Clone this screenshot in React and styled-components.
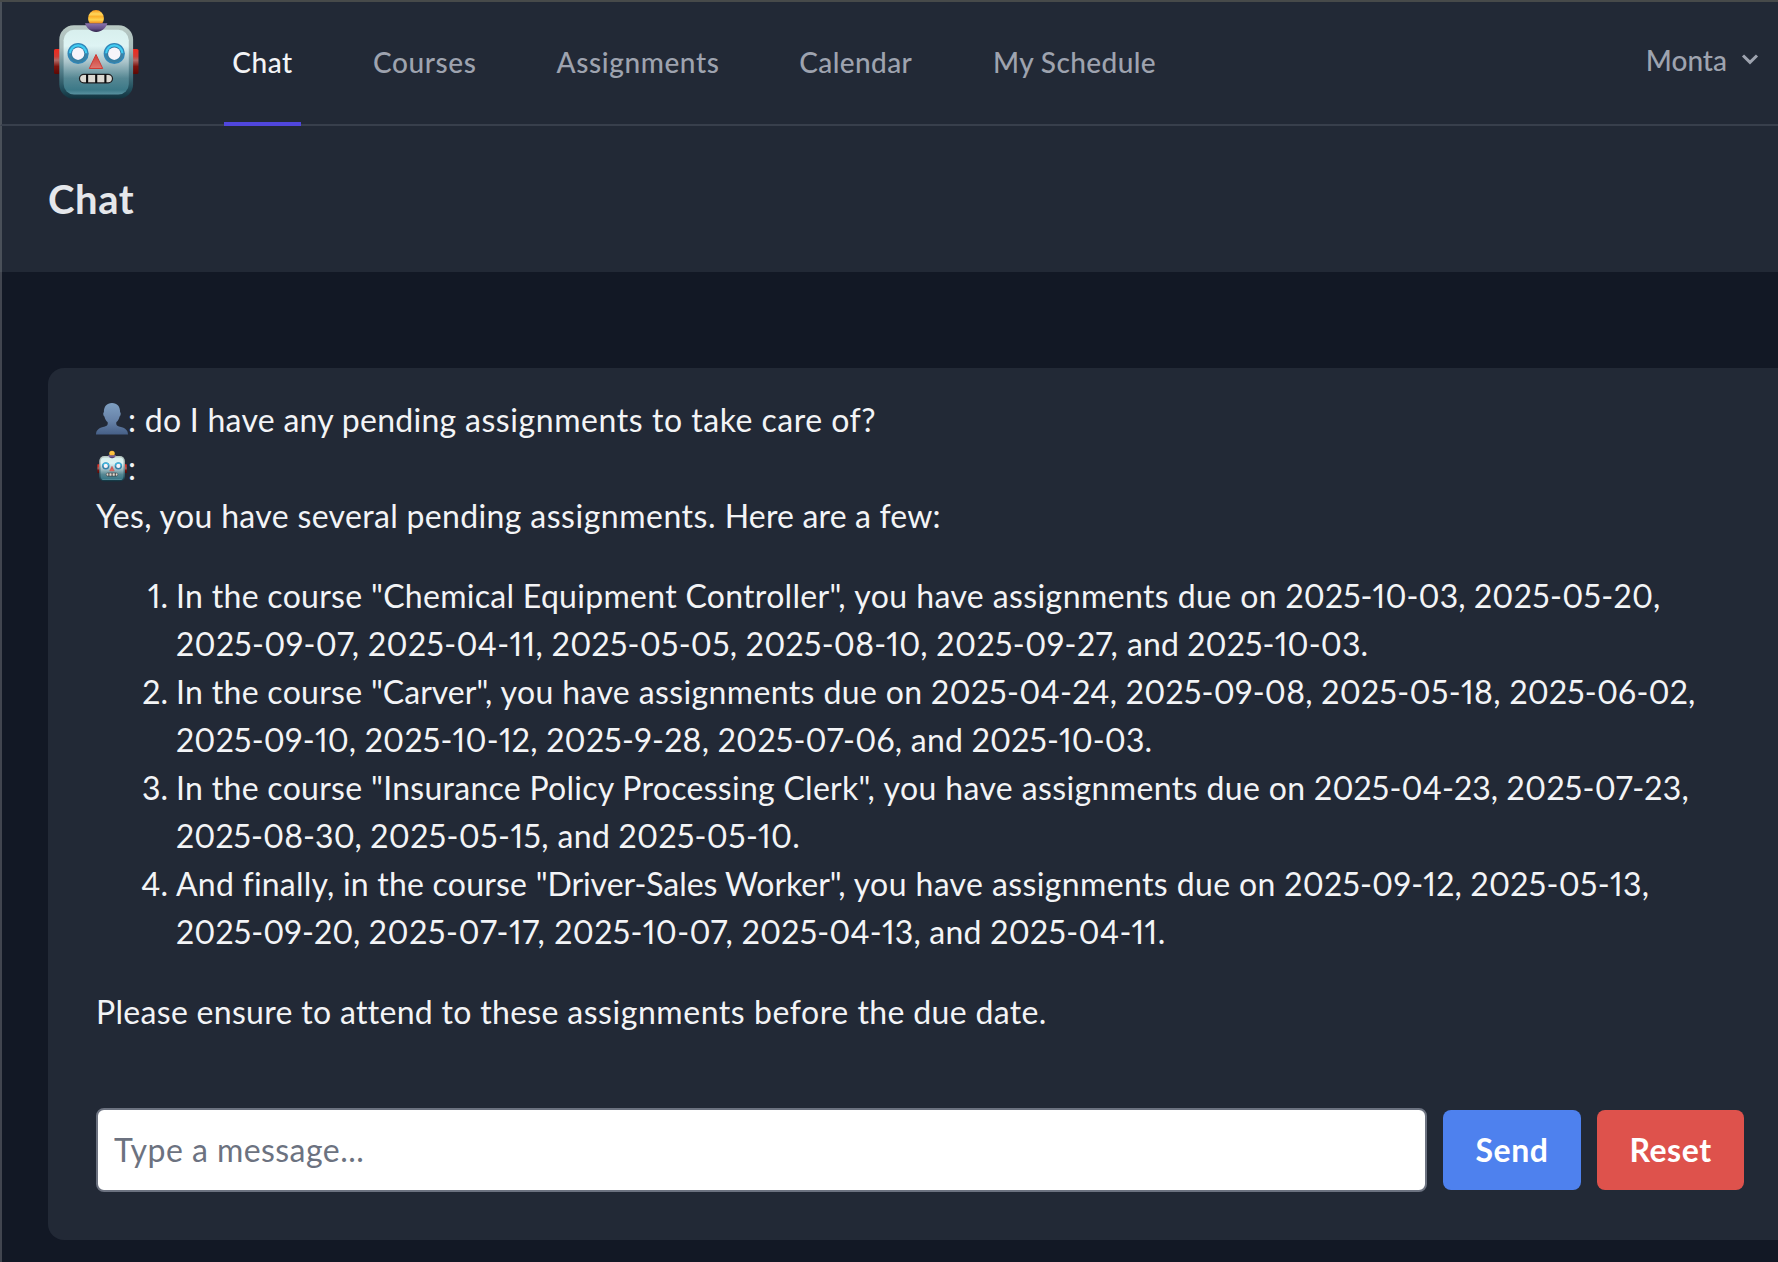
import React from "react";
import styled, { createGlobalStyle } from "styled-components";

const color = {
  page: "#121825",
  panel: "#222936",
  line: "#383f4c",
  edge: "#4a5059",
  edgeDark: "#41454f",
  top: "#474a4a",
  muted: "#9ea3af",
  title: "#e5e7eb",
  text: "#f3f4f6",
  accent: "#5046dd",
  blue: "#4e81ee",
  red: "#de524c",
  field: "#6c7280",
};

const GlobalStyle = createGlobalStyle`
  *, *::before, *::after { box-sizing: border-box; }
  body {
    margin: 0;
    background: ${color.page};
    font-family: Lato, "Liberation Sans", sans-serif;
    font-feature-settings: "pnum";
    overflow: hidden;
  }
`;

const Page = styled.div`
  height: 1262px;
  overflow: hidden;
  border-top: 2px solid ${color.top};
  background: ${color.page};
`;

const NavBar = styled.nav`
  display: flex;
  align-items: stretch;
  height: 124px;
  padding: 0 19px 0 50px;
  background: ${color.panel};
  border-left: 2px solid ${color.edge};
  border-bottom: 2px solid ${color.line};
`;

const Brand = styled.a`
  display: flex;
  width: 88px;
  padding-top: 6px;
`;

const Links = styled.div`
  display: flex;
  gap: 64px;
  margin-left: 84px;
  margin-bottom: -2px;
`;

const NavLink = styled.a`
  display: flex;
  align-items: center;
  justify-content: center;
  width: ${(p) => p.$width}px;
  padding-bottom: 1px;
  border-bottom: 4px solid ${(p) => (p.$active ? color.accent : "transparent")};
  color: ${(p) => (p.$active ? color.text : color.muted)};
  font-size: 28px;
  font-weight: 500;
  line-height: 40px;
  letter-spacing: ${(p) => p.$track}px;
  white-space: nowrap;
`;

const Account = styled.button`
  display: flex;
  align-items: center;
  gap: 14px;
  margin-left: auto;
  padding: 0 0 7px;
  border: 0;
  background: none;
  color: ${color.muted};
  font: 500 28px Lato, sans-serif;
`;

const Header = styled.header`
  display: flex;
  align-items: center;
  height: 146px;
  padding: 0 46px 0 46px;
  background: ${color.panel};
  border-left: 2px solid ${color.edge};
`;

const Title = styled.h2`
  margin: 0;
  padding-bottom: 1px;
  color: ${color.title};
  font-size: 40px;
  font-weight: 700;
  line-height: 50px;
  letter-spacing: 0.6px;
`;

const Main = styled.main`
  height: 990px;
  padding: 96px 0 0 46px;
  border-left: 2px solid ${color.edgeDark};
`;

const Card = styled.section`
  height: 872px;
  padding: 28px 34px 0 48px;
  border-radius: 16px 0 0 16px;
  background: ${color.panel};
  color: ${color.text};
  font-size: 32px;
  line-height: 48px;
`;

const Line = styled.div`
  display: flex;
  height: 48px;
  white-space: pre;
`;

const Run = styled.span`
  letter-spacing: ${(p) => p.$track}px;
`;

const Emoji = styled.span`
  display: flex;
  width: 32px;
  padding-top: 6px;
`;

const List = styled.ol`
  margin: 32px 0;
  padding: 0;
  list-style: none;
`;

const Item = styled.li`
  display: grid;
  grid-template-columns: 72px 1fr;
  column-gap: 8px;
`;

const Marker = styled.span`
  text-align: right;
`;

const Composer = styled.form`
  display: flex;
  align-items: center;
  gap: 16px;
  margin-top: 72px;
`;

const Field = styled.input`
  width: 1331px;
  height: 84px;
  padding: 0 16px 2px;
  border: 2px solid ${color.field};
  border-radius: 8px;
  background: #fff;
  font: 400 32px Lato, sans-serif;
  letter-spacing: 0.45px;
  &::placeholder { color: ${color.field}; opacity: 1; }
`;

const Button = styled.button`
  width: ${(p) => p.$width}px;
  height: 80px;
  padding: 0 0 2px;
  border: 0;
  border-radius: 8px;
  background: ${(p) => p.$fill};
  color: #fff;
  font: 700 32px Lato, sans-serif;
  letter-spacing: 0.55px;
`;

function Robot({ id, width, height }) {
  const ref = (name) => `url(#${id}-${name})`;
  return (
    <svg width={width} height={height} viewBox="52 8 88 92" role="img" aria-label="robot">
      <defs>
        <linearGradient id={`${id}-rim`} x1="0" y1="0" x2="0" y2="1">
          <stop offset="0" stopColor="#b9c9c4" />
          <stop offset=".3" stopColor="#a9bcbb" />
          <stop offset=".6" stopColor="#56818c" />
          <stop offset=".85" stopColor="#24515f" />
          <stop offset="1" stopColor="#12323e" />
        </linearGradient>
        <linearGradient id={`${id}-face`} x1="0" y1="0" x2="0" y2="1">
          <stop offset="0" stopColor="#d8efed" />
          <stop offset=".25" stopColor="#def4f4" />
          <stop offset=".5" stopColor="#a9c3c9" />
          <stop offset=".75" stopColor="#558793" />
          <stop offset=".93" stopColor="#3c7988" />
          <stop offset="1" stopColor="#5992a0" />
        </linearGradient>
        <linearGradient id={`${id}-ear`} x1="0" y1="0" x2="0" y2="1">
          <stop offset="0" stopColor="#f0281c" />
          <stop offset=".3" stopColor="#d23c34" />
          <stop offset=".45" stopColor="#b06a66" />
          <stop offset=".7" stopColor="#7c120c" />
          <stop offset="1" stopColor="#5c0804" />
        </linearGradient>
        <linearGradient id={`${id}-ball`} x1="0" y1="0" x2="0" y2="1">
          <stop offset="0" stopColor="#f79a1c" />
          <stop offset=".3" stopColor="#ffd75c" />
          <stop offset=".5" stopColor="#fbb02a" />
          <stop offset=".75" stopColor="#ffd650" />
          <stop offset="1" stopColor="#ee8a1c" />
        </linearGradient>
        <linearGradient id={`${id}-cap`} x1="0" y1="0" x2="0" y2="1">
          <stop offset="0" stopColor="#8d75ad" />
          <stop offset=".6" stopColor="#644f86" />
          <stop offset="1" stopColor="#2c2047" />
        </linearGradient>
        <linearGradient id={`${id}-eye`} x1="0" y1="0" x2="0" y2="1">
          <stop offset="0" stopColor="#3d83a6" />
          <stop offset="1" stopColor="#3a7f9f" />
        </linearGradient>
        <linearGradient id={`${id}-nose`} x1="0" y1="0" x2="0" y2="1">
          <stop offset="0" stopColor="#d03c34" />
          <stop offset="1" stopColor="#dd7770" />
        </linearGradient>
      </defs>
      <rect x="54" y="49" width="7" height="25" rx="1.6" fill={ref("ear")} />
      <rect x="131.5" y="49" width="7" height="25" rx="1.6" fill={ref("ear")} />
      <rect x="59.3" y="25.3" width="73.8" height="73.4" rx="14.5" fill={ref("rim")} />
      <rect x="63.6" y="29.8" width="65.2" height="64.7" rx="10.5" fill={ref("face")} />
      <path d="M85 23.3h22.4c-1.6 5-6 8.7-11.2 8.7s-9.6-3.7-11.2-8.7z" fill={ref("cap")} />
      <path d="M88.1 18a7.9 7.9 0 1 1 15.8 0c0 2.2-.6 3.8-1.6 5.2H89.7c-1-1.4-1.6-3-1.6-5.2z" fill={ref("ball")} />
      {[78.1, 114.3].map((x) => (
        <g key={x}>
          <circle cx={x} cy="53.5" r="10.6" fill="#2f86b8" />
          <path d={`M${x - 9.2} 53.5a9.2 9.2 0 0 1 18.4 0z`} fill="#41cdf2" />
          <path d={`M${x - 9.2} 53.5a9.2 9.2 0 0 0 18.4 0z`} fill={ref("eye")} />
          <circle cx={x} cy="53.7" r="7.1" fill="#2f7ba5" />
          <circle cx={x} cy="53.7" r="6.2" fill="#f6f4fa" />
        </g>
      ))}
      <path d="M96 54.5 102.7 68.5H89.3z" fill={ref("nose")} stroke="#cf3a33" strokeWidth="1" strokeLinejoin="round" />
      <rect x="79.5" y="74.3" width="33" height="8.6" rx="4.3" fill="#dcd9d2" stroke="#1c1d20" strokeWidth="1.2" />
      <path d="M87.1 74v9M96.2 74v9M105.4 74v9" stroke="#0d0d0f" strokeWidth="2.1" />
    </svg>
  );
}

function Person() {
  return (
    <svg width="32" height="33" viewBox="0 0 32 33" role="img" aria-label="person">
      <defs>
        <linearGradient id="person-fill" x1="0" y1="0" x2="0" y2="1">
          <stop offset="0" stopColor="#7f9fc2" />
          <stop offset=".6" stopColor="#6580a6" />
          <stop offset="1" stopColor="#465f87" />
        </linearGradient>
      </defs>
      <path
        fill="url(#person-fill)"
        d="M16 1c5.3 0 8.2 3.7 8.1 9.2.9.1.9 3.5-.5 4.2-.7 2.8-1.9 4.5-3.2 5.7-.6 3 .5 3.900 3.600 4.700 5.200 1.200 8 3.400 8 7.700H0c0-4.300 2.800-6.500 8-7.700 3.100-.8 4.200-1.700 3.600-4.700-1.300-1.200-2.500-2.900-3.200-5.700-1.400-.7-1.400-4.100-.5-4.200C7.800 4.700 10.700 1 16 1z"
      />
    </svg>
  );
}

function Chevron() {
  return (
    <svg width="18" height="14" viewBox="0 0 18 14" aria-hidden="true">
      <path d="M2 2.5 9 9.400 16 2.500" fill="none" stroke="currentColor" strokeWidth="3" />
    </svg>
  );
}

const links = [
  { label: "Chat", width: 77, track: 0.5, active: true },
  { label: "Courses", width: 119.5, track: 0.6 },
  { label: "Assignments", width: 179, track: 0.6 },
  { label: "Calendar", width: 128.5, track: 0.4 },
  { label: "My Schedule", width: 181, track: 0.4 },
];

/* Each run is [text, letter-spacing in px]. */
const question = [[": do I have any pending ", 0.27], ["assignments ", 0.58], ["to take care of?", 0.5]];
const intro = [["Yes, you have several pending ", 0.34], ["assignments. ", 0.52], ["Here are a few:", 0.16]];
const outro = [["Please ensure to attend to these ", 0.31], ["assignments before ", 0.55], ["the due date.", 0.35]];
const items = [
  [
    [["In the course ", 0.31], ['"Chemical Equipment Controller", ', 0.29], ["you have assignments due on ", 0.4], ["2025-10-03, ", 0.1], ["2025-05-20,", 0.34]],
    [["2025-09-07, ", 0.35], ["2025-04-11, ", 0.36], ["2025-05-05, ", 0.27], ["2025-08-10, ", 0.28], ["2025-09-27, ", 0.45], ["and ", 0.13], ["2025-10-03.", 0.16]],
  ],
  [
    [["In the course ", 0.31], ['"Carver", ', 0], ["you have assignments due on ", 0.38], ["2025-04-24, ", 0.31], ["2025-09-08, ", 0.25], ["2025-05-18, ", 0.37], ["2025-06-02,", 0.18]],
    [["2025-09-10, ", 0.24], ["2025-10-12, ", 0.25], ["2025-9-28, ", 0.29], ["2025-07-06, ", 0.27], ["and ", 0.26], ["2025-10-03.", 0.11]],
  ],
  [
    [["In the course ", 0.31], ['"Insurance Policy Processing Clerk", ', 0.28], ["you have assignments due on ", 0.38], ["2025-04-23, ", 0.15], ["2025-07-23,", 0.31]],
    [["2025-08-30, ", 0.1], ["2025-05-15, ", 0.42], ["and ", 0.28], ["2025-05-10.", 0.33]],
  ],
  [
    [["And finally, in the course ", 0.22], ['"Driver-Sales Worker", ', -0.05], ["you have assignments due on ", 0.38], ["2025-09-12, ", 0.24], ["2025-05-13,", 0.32]],
    [["2025-09-20, ", 0.12], ["2025-07-17, ", 0.63], ["2025-10-07, ", 0.37], ["2025-04-13, ", 0.19], ["and ", 0.28], ["2025-04-11.", 0.34]],
  ],
];

function TextLine({ runs, children }) {
  return (
    <Line>
      {children}
      {runs.map(([text, track], i) => (
        <Run key={i} $track={track}>{text}</Run>
      ))}
    </Line>
  );
}

export default function App() {
  return (
    <>
      <GlobalStyle />
      <Page>
        <NavBar>
          <Brand><Robot id="logo" width={88} height={92} /></Brand>
          <Links>
            {links.map((l) => (
              <NavLink key={l.label} $width={l.width} $track={l.track} $active={l.active}>{l.label}</NavLink>
            ))}
          </Links>
          <Account>Monta<Chevron /></Account>
        </NavBar>
        <Header><Title>Chat</Title></Header>
        <Main>
          <Card>
            <TextLine runs={question}><Emoji><Person /></Emoji></TextLine>
            <TextLine runs={[[":", 0]]}><Emoji><Robot id="reply" width={32} height={32} /></Emoji></TextLine>
            <TextLine runs={intro} />
            <List>
              {items.map((lines, i) => (
                <Item key={i}>
                  <Marker>{i + 1}.</Marker>
                  <div>{lines.map((runs, j) => <TextLine key={j} runs={runs} />)}</div>
                </Item>
              ))}
            </List>
            <TextLine runs={outro} />
            <Composer>
              <Field placeholder="Type a message..." />
              <Button type="button" $width={138} $fill={color.blue}>Send</Button>
              <Button type="button" $width={147} $fill={color.red}>Reset</Button>
            </Composer>
          </Card>
        </Main>
      </Page>
    </>
  );
}
